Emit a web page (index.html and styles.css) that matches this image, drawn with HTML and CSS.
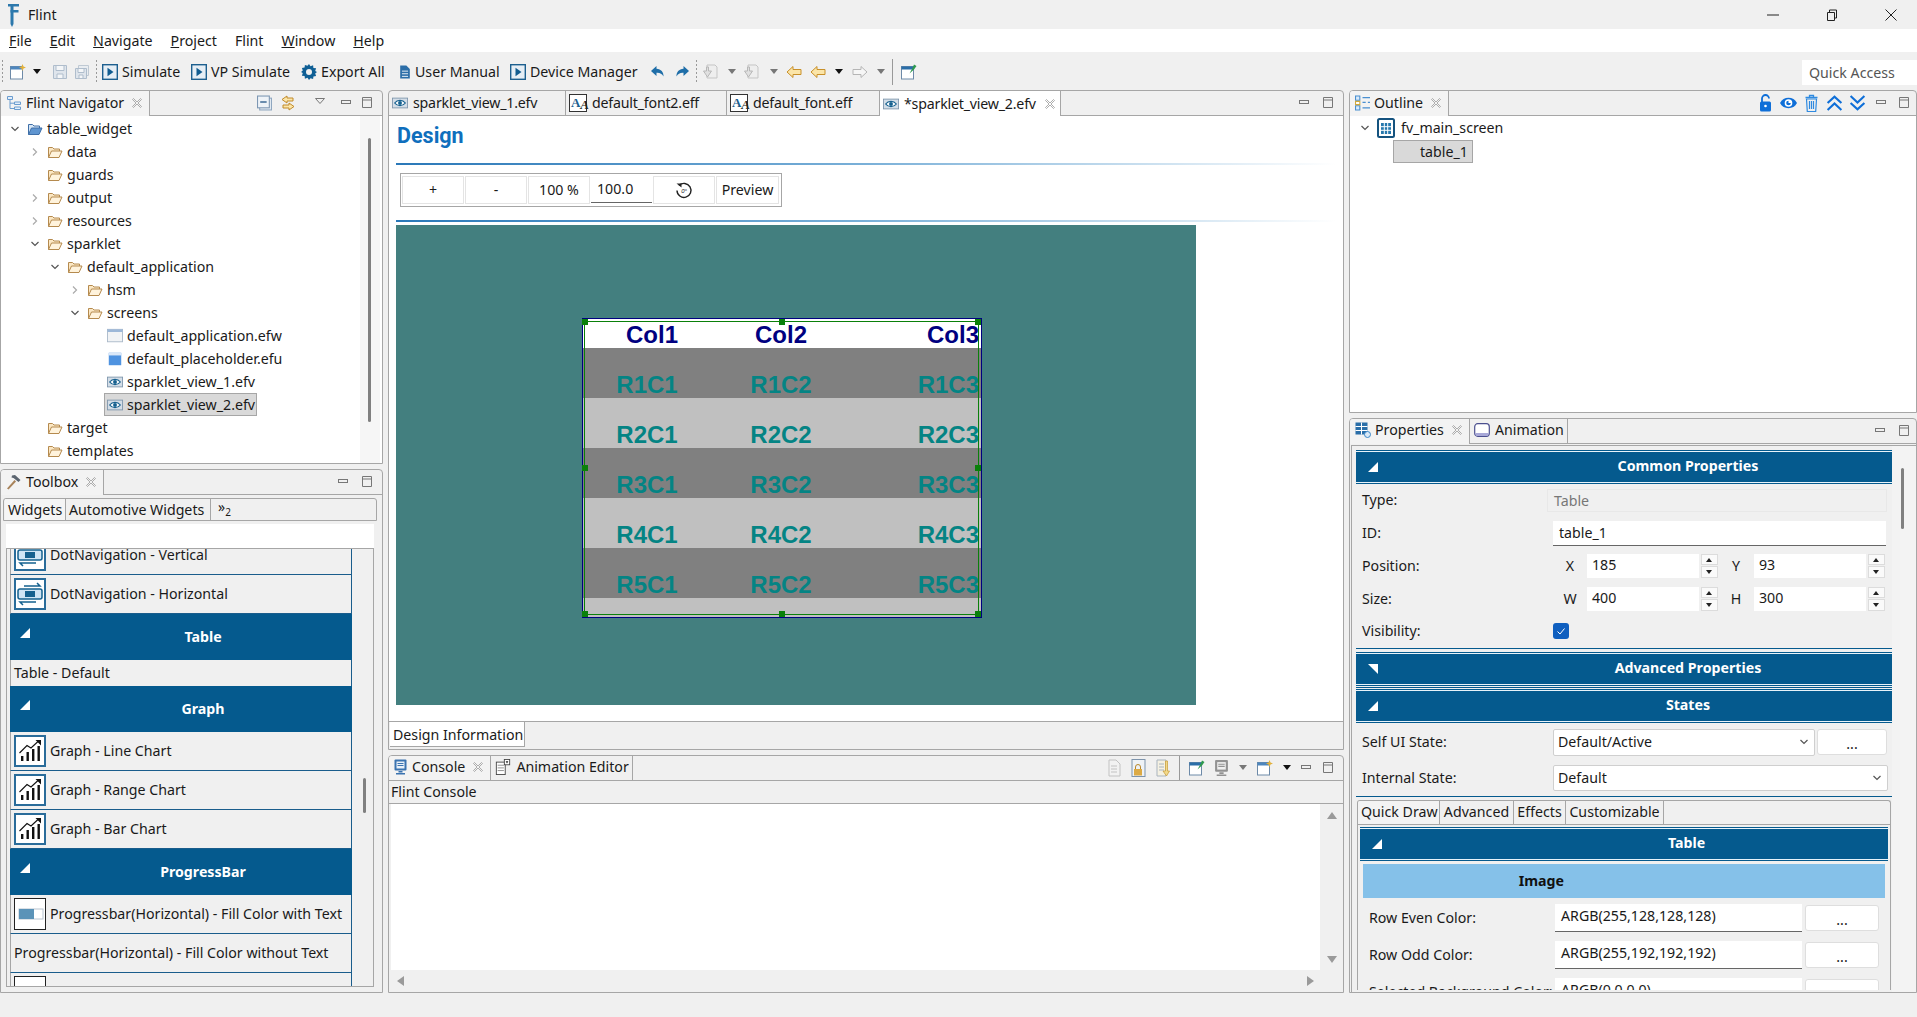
FILE: index.html
```html
<!DOCTYPE html>
<html lang="en">
<head>
<meta charset="utf-8">
<title>Flint</title>
<link rel="stylesheet" href="styles.css">
</head>
<body>
<svg class="defs" width="0" height="0" aria-hidden="true">
  <symbol id="folder" viewBox="0 0 16 16"><path d="M1.500 13.500V3.500h4l1.500 1.500h5.500v2" fill="#fbe7c3" stroke="#b58a4e"/><path d="M1.500 13.500l3-6.500h10.500l-3 6.500z" fill="#fff3dc" stroke="#b58a4e" stroke-linejoin="round"/></symbol>
  <symbol id="folder-blue" viewBox="0 0 16 16"><path d="M1.500 13.500V3.500h4l1.500 1.500h5.500v2" fill="#d5e5f5" stroke="#3f6fa8"/><path d="M1.500 13.500l3-6.500h10.500l-3 6.500z" fill="#5f95d0" stroke="#3f6fa8" stroke-linejoin="round"/></symbol>
  <symbol id="eye" viewBox="0 0 18 16"><rect x=".5" y="2.500" width="17" height="11" fill="#d3dde7" stroke="#7f97ad"/><path d="M3 8c3-4 9-4 12 0-3 4-9 4-12 0z" fill="#fff" stroke="#15608f" stroke-width="1.400"/><circle cx="9" cy="8" r="2.200" fill="#15608f"/></symbol>
  <symbol id="win" viewBox="0 0 18 16"><rect x=".5" y=".5" width="17" height="14" fill="#f1f3f5" stroke="#a9b8c8"/><rect x=".5" y=".5" width="17" height="3" fill="#9db8d8"/></symbol>
  <symbol id="place" viewBox="0 0 18 16"><path d="M2 1h14v14H2z" fill="#4f93e0"/><path d="M2 1h14v3H2z" fill="#dbe8f8"/></symbol>
  <symbol id="min" viewBox="0 0 12 12"><rect x=".5" y="3.500" width="9" height="3" fill="none" stroke="#777"/></symbol>
  <symbol id="max" viewBox="0 0 12 12"><path d="M1.500.5h9v10h-9zM1.500 3h9" fill="none" stroke="#777"/></symbol>
  <symbol id="x" viewBox="0 0 12 12"><path d="M2.500 1.500L6 5l3.500-3.500 1 1L7 6l3.500 3.500-1 1L6 7l-3.500 3.500-1-1L5 6 1.500 2.500z" fill="none" stroke="#999" stroke-width=".8"/></symbol>
  <symbol id="play" viewBox="0 0 16 16"><rect x=".7" y=".7" width="14.600" height="14.600" fill="#e6eef5" stroke="#1d5f8f" stroke-width="1.400"/><path d="M5.500 3.800l6 4.200-6 4.200z" fill="#115c90"/></symbol>
  <symbol id="gear" viewBox="0 0 16 16"><path d="M8 0l1.500 2.200 2.600-.9.300 2.700 2.700.3-.9 2.600L16 8l-1.800 1.500.9 2.600-2.700.3-.3 2.700-2.600-.9L8 16l-1.500-2.200-2.600.9-.3-2.700-2.700-.3.9-2.600L0 8l1.800-1.500-.9-2.600 2.700-.3.300-2.700 2.600.9z" fill="#0f5f95"/><circle cx="8" cy="8" r="3" fill="#f0f0f0"/></symbol>
  <symbol id="doc" viewBox="0 0 12 16"><path d="M.5.500h7l4 4v11H.5z" fill="#2c6ea8"/><path d="M2.500 7h7M2.500 10h7M2.500 13h7" stroke="#fff"/></symbol>
  <symbol id="new" viewBox="0 0 16 16"><rect x=".5" y="2.500" width="12" height="12.500" fill="#fff" stroke="#6d8aa8"/><rect x=".5" y="2.500" width="12" height="3" fill="#4d86bd"/><path d="M12.500 0l1 2.500 2.500 1-2.500 1-1 2.500-1-2.500-2.500-1 2.500-1z" fill="#e2b13c"/></symbol>
  <symbol id="save" viewBox="0 0 16 16"><path d="M1.500 1.500h13v13h-13z" fill="#dbe3ec" stroke="#9fb1c4"/><path d="M4 1.500h8v5H4zM5 10h6v4.500H5z" fill="#f6f8fa" stroke="#9fb1c4"/></symbol>
  <symbol id="saveall" viewBox="0 0 16 16"><path d="M4.500 1.500h10v10h-10z" fill="#e8edf2" stroke="#b3c0cd"/><path d="M1.500 4.500h11v10h-11z" fill="#dbe3ec" stroke="#9fb1c4"/><path d="M4 4.500h6v4H4zM5 11h4v3.500H5z" fill="#f6f8fa" stroke="#9fb1c4"/></symbol>
  <symbol id="undo" viewBox="0 0 16 16"><path d="M6.500 2L1 7l5.500 5V8.800c3-.3 5.500.7 7 3.700.3-4.500-2.500-7.500-7-7.800z" fill="#1f6ea8"/></symbol>
  <symbol id="nav-down" viewBox="0 0 16 16"><path d="M5 1h8l2 2v11H5z" fill="#eee" stroke="#bbb"/><path d="M1.500 7h3V3h2v4h3l-4 6z" fill="#ddd" stroke="#aaa"/></symbol>
  <symbol id="arrow-y" viewBox="0 0 16 16"><path d="M7 2.500L1 8l6 5.500V10.500h8v-5H7z" fill="#fbe5a8" stroke="#c8902a"/></symbol>
  <symbol id="arrow-g" viewBox="0 0 16 16"><path d="M9 2.500L15 8l-6 5.500V10.500H1v-5h8z" fill="#f6f6f6" stroke="#b5b5b5"/></symbol>
  <symbol id="pin" viewBox="0 0 16 16"><rect x=".5" y="2.500" width="12" height="12.500" fill="#fff" stroke="#6d8aa8"/><rect x=".5" y="2.500" width="12" height="3" fill="#2a6ea8"/><path d="M8.500 9.500l3-5.500 1.500-3.500 2.500 1.500-2.500 3.500z" fill="#2f9a4f"/></symbol>
  <symbol id="tree" viewBox="0 0 16 16"><path d="M1.500 1.500h5v3h-5zM8.500 7h6v2.500h-6zM8.500 12h6v2.500h-6z" fill="#e3eefa" stroke="#6a9ccf"/><path d="M4 5v8.500h4.500M4 8.200h4.500" fill="none" stroke="#6a9ccf"/></symbol>
  <symbol id="hammer" viewBox="0 0 16 16"><path d="M1 14.500L8.500 6l1.500 1.500L2.500 15.500z" fill="#a8835a"/><path d="M6 1.500l3-.5 5.500 5-2 2L7.500 4 5.500 3.500z" fill="#5c6570"/></symbol>
  <symbol id="collapse" viewBox="0 0 14 14"><rect x="2.500" y="2.500" width="11" height="11" fill="#e8eef5" stroke="#8fa7c0"/><rect x=".5" y=".5" width="11" height="11" fill="#eef3f8" stroke="#7d97b3"/><path d="M3 6h6" stroke="#3d6a96" stroke-width="1.400"/></symbol>
  <symbol id="link" viewBox="0 0 16 16"><path d="M7 1L2 4.500 7 8V6h6V3H7zM9 8l5 3.500-5 3.500v-2H3v-3h6z" fill="#fbe5a8" stroke="#c08a2b"/></symbol>
  <symbol id="outl" viewBox="0 0 14 14"><path d="M.5.500h4v4h-4zM.5 9.500h4v4h-4z" fill="#d9eafa" stroke="#4a8fd0"/><path d="M7 2h7M7 6.500h3M12 6.500h2M7 11.500h7" stroke="#4a8fd0" stroke-width="1.200"/><path d="M.5 5.500h4v3h-4z" fill="#fff" stroke="#d0a83a"/></symbol>
  <symbol id="lock" viewBox="0 0 14 18"><path d="M3.500 8V4.500a3.500 3.500 0 0 1 7 0" fill="none" stroke="#0f6fd8" stroke-width="1.800"/><rect x="1.500" y="7.500" width="11" height="10" rx="1.500" fill="#0f6fd8"/><circle cx="7" cy="12" r="1.300" fill="#fff"/></symbol>
  <symbol id="eye2" viewBox="0 0 16 12"><path d="M0 6c3-6.500 13-6.500 16 0-3 6.500-13 6.500-16 0z" fill="#0f6fd8"/><circle cx="8" cy="6" r="3.600" fill="#fff"/><path d="M8 3.800V6h2.200A2.200 2.200 0 1 1 8 3.800z" fill="#0f6fd8"/></symbol>
  <symbol id="trash" viewBox="0 0 14 18"><path d="M1 3.500h12M5 3V1.500h4V3" fill="none" stroke="#2f8ae0" stroke-width="1.300"/><path d="M2 5h10l-.8 12.500H2.800zM5 7v8M7 7v8M9 7v8" fill="none" stroke="#2f8ae0" stroke-width="1.200"/></symbol>
  <symbol id="up2" viewBox="0 0 16 16"><path d="M1.500 8L8 2l6.500 6M1.500 14.500L8 8.500l6.500 6" fill="none" stroke="#0f6fd8" stroke-width="2"/></symbol>
  <symbol id="down2" viewBox="0 0 16 16"><path d="M1.500 1.500L8 7.500l6.500-6M1.500 8L8 14l6.500-6" fill="none" stroke="#0f6fd8" stroke-width="2"/></symbol>
  <symbol id="grid" viewBox="0 0 18 20"><rect x="1" y="1" width="16" height="18" rx="1.500" fill="#fff" stroke="#15537f" stroke-width="2"/><path d="M4 5h10v11H4z" fill="#2678ad"/><path d="M7.300 5v11M10.700 5v11M4 8.700h10M4 12.300h10" stroke="#fff"/></symbol>
  <symbol id="props" viewBox="0 0 16 16"><rect x=".5" y=".5" width="12" height="12" fill="#2a6ea8"/><path d="M.5 4.500h12M.5 8.500h12M6.500.5v12" stroke="#fff"/><circle cx="12.500" cy="12.500" r="3" fill="#dbe9f6" stroke="#3b87c8"/></symbol>
  <symbol id="anim" viewBox="0 0 16 14"><rect x=".7" y=".7" width="14.600" height="12.600" rx="3" fill="#fff" stroke="#4b4f8f" stroke-width="1.200"/><path d="M1.500 10h13v1.500a1.500 1.500 0 0 1-1.500 1.500H3a1.500 1.500 0 0 1-1.500-1.500z" fill="#a8a8d8"/></symbol>
  <symbol id="console" viewBox="0 0 14 16"><rect x="1" y=".5" width="12" height="11" rx="1" fill="#3a73b0"/><rect x="3" y="2.500" width="8" height="7" fill="#e8f0f8"/><path d="M4 4.500h6M4 6.500h6" stroke="#3a73b0"/><path d="M5 12h4v1.500H5zM2.500 14h9v1.500h-9z" fill="#3a73b0"/></symbol>
  <symbol id="animed" viewBox="0 0 16 18"><rect x=".5" y="3.500" width="10" height="14" fill="#fff" stroke="#444"/><path d="M2 7h7M2 10h7M2 13h7" stroke="#888"/><rect x="9.500" y=".5" width="6" height="6" fill="#fff" stroke="#444"/><path d="M11 2.500h3L12.500 5z" fill="#222"/></symbol>
  <symbol id="c-doc" viewBox="0 0 14 18"><path d="M1.500 1h7l4 4v12h-11z" fill="#f2f2f2" stroke="#c2c2c2"/><path d="M3.500 7h6M3.500 10h6M3.500 13h6" stroke="#c2c2c2"/></symbol>
  <symbol id="c-doc2" viewBox="0 0 14 18"><path d="M1.500 1h9v16h-9z" fill="#f5f1e2" stroke="#a9b4bf"/><path d="M3.500 5h5M3.500 8h5M3.500 11h5" stroke="#a9b4bf"/><path d="M10 2v10H7.500l3.500 5 3-5h-2V2z" fill="#f2d98a" stroke="#c79b35" stroke-width=".7"/></symbol>
  <symbol id="c-lock" viewBox="0 0 14 18"><rect x=".5" y=".5" width="13" height="17" fill="#eef2f6" stroke="#7d93ab"/><path d="M4 10V8a2.500 2.500 0 0 1 5 0v2" fill="none" stroke="#b8872a"/><rect x="2.500" y="10" width="8" height="6.500" fill="#dcaa45"/></symbol>
  <symbol id="dotnav" viewBox="0 0 28 28"><path d="M2 11a2 2 0 0 1 2-2h20a2 2 0 0 1 2 2v6a2 2 0 0 1-2 2H4a2 2 0 0 1-2-2z" fill="#cfe5f5" stroke="#15618f" stroke-width="1.500"/><rect x="9" y="11" width="10" height="6" fill="#15618f"/><path d="M8 6h16l-3-3M20 22H4l3 3" fill="none" stroke="#15618f" stroke-width="1.500"/></symbol>
  <symbol id="chart" viewBox="0 0 28 28"><path d="M5 24v-5h2.400v5zM10.500 24v-9h2.400v9zM16 24V12h2.400v12zM21.500 24V9h2.400v15z" fill="#111"/><path d="M3.500 16L11 8.500l4 2.500L22 4.500" fill="none" stroke="#111" stroke-width="1.100"/><path d="M19.500 3h5.500v5.500z" fill="#111"/></symbol>
  <symbol id="progress" viewBox="0 0 28 28"><rect x="3" y="9" width="24" height="10" fill="#fff" stroke="#b8c4d0"/><rect x="3" y="9" width="15" height="10" fill="#5b93b8"/></symbol>
  <symbol id="tri-open" viewBox="0 0 10 10"><path d="M10 0v10H0z" fill="#fff"/></symbol>
  <symbol id="tri-closed" viewBox="0 0 10 10"><path d="M0 0h10v10z" fill="#fff"/></symbol>
  <symbol id="chev-d" viewBox="0 0 10 10"><path d="M1.500 3L5 6.500 8.500 3" fill="none" stroke="#555" stroke-width="1.200"/></symbol>
  <symbol id="chev-r" viewBox="0 0 10 10"><path d="M3 1.500L6.500 5 3 8.500" fill="none" stroke="#aaa" stroke-width="1.200"/></symbol>
  <symbol id="drop" viewBox="0 0 10 6"><path d="M1 0h8L5 5z"/></symbol>
</svg>

<header class="titlebar">
  <svg class="logo" viewBox="0 0 11 24"><path d="M0 1h11v2.500H0zM2.500 7h8v2.500h-8z" fill="#2c78ac"/><path d="M2.500 3h3v18L4 24l-1.500-3z" fill="#2c78ac"/></svg>
  <span class="app-name">Flint</span>
  <div class="win-btns">
    <svg class="win-ic" viewBox="0 0 12 12"><path d="M0 6h12" stroke="#222"/></svg>
    <svg class="win-ic" viewBox="0 0 12 12"><path d="M1.500 3.500h7v8h-7zM3.500 3.500V1h7v8H8.500" fill="none" stroke="#222"/></svg>
    <svg class="win-ic" viewBox="0 0 12 12"><path d="M.5.500l11 11M11.500.500l-11 11" stroke="#222"/></svg>
  </div>
</header>

<nav class="menubar">
  <span class="menu-item"><u>F</u>ile</span>
  <span class="menu-item"><u>E</u>dit</span>
  <span class="menu-item"><u>N</u>avigate</span>
  <span class="menu-item"><u>P</u>roject</span>
  <span class="menu-item">Flint</span>
  <span class="menu-item"><u>W</u>indow</span>
  <span class="menu-item"><u>H</u>elp</span>
</nav>

<div class="toolbar">
  <span class="grip"></span>
  <svg class="ic16 m7"><use href="#new"/></svg>
  <svg class="drop m6"><use href="#drop"/></svg>
  <svg class="ic16 m10 dim"><use href="#save"/></svg>
  <svg class="ic16 m6 dim"><use href="#saveall"/></svg>
  <span class="grip m6"></span>
  <span class="tool m5 t-sim"><svg class="ic16"><use href="#play"/></svg>Simulate</span>
  <span class="tool t-vp"><svg class="ic16"><use href="#play"/></svg>VP Simulate</span>
  <span class="tool t-exp"><svg class="ic16"><use href="#gear"/></svg>Export All</span>
  <span class="tool t-man"><svg class="ic12"><use href="#doc"/></svg>User Manual</span>
  <span class="tool t-dev"><svg class="ic16"><use href="#play"/></svg>Device Manager</span>
  <svg class="ic16"><use href="#undo"/></svg>
  <svg class="ic16 m8 flip"><use href="#undo"/></svg>
  <span class="grip m6"></span>
  <svg class="ic16 m5 dim"><use href="#nav-down"/></svg>
  <svg class="drop m9 gray"><use href="#drop"/></svg>
  <svg class="ic16 m6 dim"><use href="#nav-down"/></svg>
  <svg class="drop m10 gray"><use href="#drop"/></svg>
  <svg class="ic16 m7"><use href="#arrow-y"/></svg>
  <svg class="ic16 m8"><use href="#arrow-y"/></svg>
  <svg class="drop m8"><use href="#drop"/></svg>
  <svg class="ic16 m8"><use href="#arrow-g"/></svg>
  <svg class="drop m8 gray"><use href="#drop"/></svg>
  <span class="vsep m6"></span>
  <svg class="ic16 m8"><use href="#pin"/></svg>
  <span class="quick">Quick Access</span>
</div>

<main class="workbench">
  <div class="col">
    <section class="panel nav-panel">
      <div class="phead">
        <div class="ptab ptab-on"><svg class="ic16"><use href="#tree"/></svg>Flint Navigator<svg class="ic-x"><use href="#x"/></svg></div>
        <div class="pactions a-nav">
          <svg class="ic14"><use href="#collapse"/></svg>
          <svg class="ic16"><use href="#link"/></svg>
          <svg class="drop-o" viewBox="0 0 10 6"><path d="M.5.500h9L5 5.500z" fill="none" stroke="#777"/></svg>
          <svg class="ic12"><use href="#min"/></svg>
          <svg class="ic12"><use href="#max"/></svg>
        </div>
      </div>
      <div class="pbody tree-wrap">
        <div class="tree">
          <div class="trow lv0"><svg class="ar"><use href="#chev-d"/></svg><span class="tl"><svg class="ic16"><use href="#folder-blue"/></svg>table_widget</span></div>
          <div class="trow lv1"><svg class="ar"><use href="#chev-r"/></svg><span class="tl"><svg class="ic16"><use href="#folder"/></svg>data</span></div>
          <div class="trow lv1"><span class="ar"></span><span class="tl"><svg class="ic16"><use href="#folder"/></svg>guards</span></div>
          <div class="trow lv1"><svg class="ar"><use href="#chev-r"/></svg><span class="tl"><svg class="ic16"><use href="#folder"/></svg>output</span></div>
          <div class="trow lv1"><svg class="ar"><use href="#chev-r"/></svg><span class="tl"><svg class="ic16"><use href="#folder"/></svg>resources</span></div>
          <div class="trow lv1"><svg class="ar"><use href="#chev-d"/></svg><span class="tl"><svg class="ic16"><use href="#folder"/></svg>sparklet</span></div>
          <div class="trow lv2"><svg class="ar"><use href="#chev-d"/></svg><span class="tl"><svg class="ic16"><use href="#folder"/></svg>default_application</span></div>
          <div class="trow lv3"><svg class="ar"><use href="#chev-r"/></svg><span class="tl"><svg class="ic16"><use href="#folder"/></svg>hsm</span></div>
          <div class="trow lv3"><svg class="ar"><use href="#chev-d"/></svg><span class="tl"><svg class="ic16"><use href="#folder"/></svg>screens</span></div>
          <div class="trow lv4"><span class="ar"></span><span class="tl"><svg class="ic16"><use href="#win"/></svg>default_application.efw</span></div>
          <div class="trow lv4"><span class="ar"></span><span class="tl"><svg class="ic16"><use href="#place"/></svg>default_placeholder.efu</span></div>
          <div class="trow lv4"><span class="ar"></span><span class="tl"><svg class="ic16"><use href="#eye"/></svg>sparklet_view_1.efv</span></div>
          <div class="trow lv4"><span class="ar"></span><span class="tl tl-sel"><svg class="ic16"><use href="#eye"/></svg>sparklet_view_2.efv</span></div>
          <div class="trow lv1"><span class="ar"></span><span class="tl"><svg class="ic16"><use href="#folder"/></svg>target</span></div>
          <div class="trow lv1"><span class="ar"></span><span class="tl"><svg class="ic16"><use href="#folder"/></svg>templates</span></div>
        </div>
        <div class="vscroll nav-scroll"><span class="thumb"></span></div>
      </div>
    </section>

    <section class="panel box-panel">
      <div class="phead">
        <div class="ptab ptab-on"><svg class="ic16"><use href="#hammer"/></svg>Toolbox<svg class="ic-x"><use href="#x"/></svg></div>
        <div class="pactions a-box">
          <svg class="ic12"><use href="#min"/></svg>
          <svg class="ic12"><use href="#max"/></svg>
        </div>
      </div>
      <div class="box-body">
        <div class="subtabs">
          <span class="subtab subtab-on">Widgets</span>
          <span class="subtab">Automotive Widgets</span>
          <span class="more">&raquo;<sub>2</sub></span>
        </div>
        <div class="search"></div>
        <div class="list-frame">
          <div class="list">
            <div class="wrow row-cut"><span class="wicon"><svg><use href="#dotnav"/></svg></span>DotNavigation - Vertical</div>
            <div class="wrow"><span class="wicon"><svg><use href="#dotnav"/></svg></span>DotNavigation - Horizontal</div>
            <div class="whead"><svg class="tri"><use href="#tri-open"/></svg>Table</div>
            <div class="wrow wrow-short">Table - Default</div>
            <div class="whead"><svg class="tri"><use href="#tri-open"/></svg>Graph</div>
            <div class="wrow"><span class="wicon"><svg><use href="#chart"/></svg></span>Graph - Line Chart</div>
            <div class="wrow"><span class="wicon"><svg><use href="#chart"/></svg></span>Graph - Range Chart</div>
            <div class="wrow"><span class="wicon"><svg><use href="#chart"/></svg></span>Graph - Bar Chart</div>
            <div class="whead"><svg class="tri"><use href="#tri-open"/></svg>ProgressBar</div>
            <div class="wrow"><span class="wicon wicon-dark"><svg><use href="#progress"/></svg></span>Progressbar(Horizontal) - Fill Color with Text</div>
            <div class="wrow">Progressbar(Horizontal) - Fill Color without Text</div>
            <div class="wrow"><span class="wicon wicon-dark"></span>Progressbar(Horizontal) - Multiple</div>
          </div>
          <div class="list-scroll"><span class="thumb"></span></div>
        </div>
      </div>
    </section>
  </div>

  <div class="col">
    <section class="panel editor-panel">
      <div class="phead">
        <div class="etab"><svg class="ic16"><use href="#eye"/></svg>sparklet_view_1.efv</div>
        <div class="etab"><span class="aa">A<i>A</i></span>default_font2.eff</div>
        <div class="etab"><span class="aa">A<i>A</i></span>default_font.eff</div>
        <div class="etab etab-on"><svg class="ic16"><use href="#eye"/></svg>*sparklet_view_2.efv<svg class="ic-x"><use href="#x"/></svg></div>
        <div class="pactions a-box">
          <svg class="ic12"><use href="#min"/></svg>
          <svg class="ic12"><use href="#max"/></svg>
        </div>
      </div>
      <div class="design">
        <h1 class="design-title">Design</h1>
        <div class="rule"></div>
        <div class="dtools">
          <span class="dbtn">+</span>
          <span class="dbtn">-</span>
          <span class="dbtn">100 %</span>
          <span class="dinput">100.0</span>
          <span class="dbtn"><svg class="reset" viewBox="0 0 18 18"><path d="M4 4.500A7 7 0 1 1 2 9.500" fill="none" stroke="#222" stroke-width="1.400"/><path d="M1.500 2.500h5v4z" fill="#222"/><text x="9" y="12" class="deg">0°</text></svg></span>
          <span class="dbtn dbtn-last">Preview</span>
        </div>
        <div class="rule rule-2"></div>
        <div class="canvas">
          <div class="widget">
            <div class="wt-row wt-head"><span class="c1 hc1">Col1</span><span class="c2">Col2</span><span class="c3">Col3</span></div>
            <div class="wt-row even"><span class="c1">R1C1</span><span class="c2">R1C2</span><span class="c3">R1C3</span></div>
            <div class="wt-row odd"><span class="c1">R2C1</span><span class="c2">R2C2</span><span class="c3">R2C3</span></div>
            <div class="wt-row even"><span class="c1">R3C1</span><span class="c2">R3C2</span><span class="c3">R3C3</span></div>
            <div class="wt-row odd"><span class="c1">R4C1</span><span class="c2">R4C2</span><span class="c3">R4C3</span></div>
            <div class="wt-row even"><span class="c1">R5C1</span><span class="c2">R5C2</span><span class="c3">R5C3</span></div>
            <div class="selbox">
              <i class="h tl-h"></i><i class="h tc-h"></i><i class="h tr-h"></i>
              <i class="h ml-h"></i><i class="h mr-h"></i>
              <i class="h bl-h"></i><i class="h bc-h"></i><i class="h br-h"></i>
            </div>
          </div>
        </div>
      </div>
      <div class="btabs"><span class="btab">Design Information</span></div>
    </section>

    <section class="panel console-panel">
      <div class="phead">
        <div class="ctab ctab-on"><svg class="ic14"><use href="#console"/></svg>Console<svg class="ic-x"><use href="#x"/></svg></div>
        <div class="ctab"><svg class="ic16"><use href="#animed"/></svg>Animation Editor</div>
        <div class="pactions a-con">
          <svg class="ic-c"><use href="#c-doc"/></svg>
          <svg class="ic-c"><use href="#c-lock"/></svg>
          <svg class="ic-c"><use href="#c-doc2"/></svg>
          <span class="vsep vsep-s"></span>
          <svg class="ic16"><use href="#pin"/></svg>
          <svg class="ic-c gs"><use href="#console"/></svg>
          <svg class="drop gray"><use href="#drop"/></svg>
          <svg class="ic16"><use href="#new"/></svg>
          <svg class="drop"><use href="#drop"/></svg>
          <svg class="ic12"><use href="#min"/></svg>
          <svg class="ic12"><use href="#max"/></svg>
        </div>
      </div>
      <div class="con-label">Flint Console</div>
      <div class="con-main">
        <div class="con-text"></div>
        <div class="con-v"><span class="ar-up"></span><span class="ar-down"></span></div>
      </div>
      <div class="con-h"><span class="ar-left"></span><span class="ar-right"></span></div>
    </section>
  </div>

  <div class="col">
    <section class="panel outline-panel">
      <div class="phead">
        <div class="ptab ptab-on"><svg class="ic14"><use href="#outl"/></svg>Outline<svg class="ic-x"><use href="#x"/></svg></div>
        <div class="pactions a-out">
          <svg class="ic-o"><use href="#lock"/></svg>
          <svg class="ic-o"><use href="#eye2"/></svg>
          <svg class="ic-o"><use href="#trash"/></svg>
          <svg class="ic-o"><use href="#up2"/></svg>
          <svg class="ic-o"><use href="#down2"/></svg>
          <svg class="ic12"><use href="#min"/></svg>
          <svg class="ic12"><use href="#max"/></svg>
        </div>
      </div>
      <div class="pbody out-body">
        <div class="orow"><svg class="ar"><use href="#chev-d"/></svg><svg class="ic-grid"><use href="#grid"/></svg>fv_main_screen</div>
        <div class="osel">table_1</div>
      </div>
    </section>

    <section class="panel props-panel">
      <div class="phead">
        <div class="ptab ptab-on"><svg class="ic16"><use href="#props"/></svg>Properties<svg class="ic-x"><use href="#x"/></svg></div>
        <div class="ctab"><svg class="ic16"><use href="#anim"/></svg>Animation</div>
        <div class="pactions a-props">
          <svg class="ic12"><use href="#min"/></svg>
          <svg class="ic12"><use href="#max"/></svg>
        </div>
      </div>
      <div class="props-outer">
        <div class="props">
          <div class="sec"><svg class="tri"><use href="#tri-open"/></svg>Common Properties</div>
          <div class="prow r-type"><label>Type:</label><span class="field field-ro">Table</span></div>
          <div class="prow r-id"><label>ID:</label><span class="field">table_1</span></div>
          <div class="prow r-pos"><label>Position:</label>
            <span class="axis">X</span><span class="num">185</span><span class="spin"><b></b><b></b></span>
            <span class="axis axis-2">Y</span><span class="num">93</span><span class="spin"><b></b><b></b></span>
          </div>
          <div class="prow r-size"><label>Size:</label>
            <span class="axis">W</span><span class="num">400</span><span class="spin"><b></b><b></b></span>
            <span class="axis axis-2">H</span><span class="num">300</span><span class="spin"><b></b><b></b></span>
          </div>
          <div class="prow r-vis"><label>Visibility:</label><span class="check"><svg viewBox="0 0 16 16"><path d="M4.500 8.500l2.500 2.500 4.500-5.500" fill="none" stroke="#fff"/></svg></span></div>
          <div class="sep s-a"></div>
          <div class="sec"><svg class="tri"><use href="#tri-closed"/></svg>Advanced Properties</div>
          <div class="sep s-b"></div>
          <div class="sec"><svg class="tri"><use href="#tri-open"/></svg>States</div>
          <div class="prow r-self"><label>Self UI State:</label><span class="combo combo-a">Default/Active<svg class="ic10"><use href="#chev-d"/></svg></span><span class="more-btn mb-a">...</span></div>
          <div class="prow r-int"><label>Internal State:</label><span class="combo combo-b">Default<svg class="ic10"><use href="#chev-d"/></svg></span></div>
          <div class="sep s-c"></div>
          <div class="qtabs-frame">
            <div class="qtabs">
              <span class="qtab qtab-on">Quick Draw</span>
              <span class="qtab">Advanced</span>
              <span class="qtab">Effects</span>
              <span class="qtab">Customizable</span>
            </div>
            <div class="sec sec-inner"><svg class="tri"><use href="#tri-open"/></svg>Table</div>
            <div class="image-head">Image</div>
            <div class="crow"><label>Row Even Color:</label><span class="cfield">ARGB(255,128,128,128)</span><span class="more-btn">...</span></div>
            <div class="crow"><label>Row Odd Color:</label><span class="cfield">ARGB(255,192,192,192)</span><span class="more-btn">...</span></div>
            <div class="crow"><label>Selected Background Color:</label><span class="cfield">ARGB(0,0,0,0)</span><span class="more-btn">...</span></div>
          </div>
        </div>
        <div class="vscroll props-scroll"><span class="thumb"></span></div>
      </div>
    </section>
  </div>
</main>
</body>
</html>
```
FILE: styles.css
```css
* { box-sizing: border-box; }
html, body { margin: 0; height: 100%; }
body {
  width: 1917px; height: 1017px; overflow: hidden;
  background: #f0f0f0; color: #1a1a1a;
  font: 14.2px/20px "Noto Sans", "Open Sans", sans-serif;
  display: flex; flex-direction: column;
}
.defs { position: absolute; }
svg { flex: none; display: block; }
u { text-decoration-thickness: 1px; }

.ic10 { width: 10px; height: 10px; }
.ic12 { width: 12px; height: 14px; }
.ic14 { width: 15px; height: 16px; }
.ic16 { width: 16px; height: 16px; }
.ic-c { width: 15px; height: 18px; }
.dim { opacity: .8; }
.gs { filter: grayscale(1); opacity: .7; }
.flip { transform: scaleX(-1); }
.m5 { margin-left: 5px; } .m6 { margin-left: 6px; } .m7 { margin-left: 7px; }
.m8 { margin-left: 8px; } .m9 { margin-left: 9px; } .m10 { margin-left: 10px; }

/* Title, menu, toolbar */
.titlebar { height: 29px; display: flex; align-items: center; padding-left: 8px; flex: none; }
.logo { width: 11px; height: 24px; }
.app-name { margin-left: 9px; }
.win-btns { margin-left: auto; display: flex; gap: 47px; padding-right: 20px; }
.win-ic { width: 12px; height: 12px; }

.menubar { height: 23px; background: #fff; display: flex; align-items: center; padding-left: 9px; flex: none; }
.menu-item { margin-right: 18px; }

.toolbar { height: 38px; flex: none; display: flex; align-items: center; padding: 1px 0 0 2px; }
.grip { width: 1px; height: 24px; background-image: linear-gradient(#999 50%, transparent 50%); background-size: 1px 4px; }
.drop { width: 10px; height: 6px; fill: #111; }
.drop.gray { fill: #777; }
.tool { display: flex; align-items: center; gap: 4px; white-space: nowrap; }
.t-sim { width: 89px; } .t-vp { width: 110px; } .t-exp { width: 98px; }
.t-man { width: 111px; } .t-dev { width: 140px; }
.vsep { width: 1px; height: 26px; background: #999; }
.quick {
  margin-left: auto; width: 115px; height: 25px; background: #fff;
  color: #555; padding-left: 7px; line-height: 25px; align-self: flex-end; margin-bottom: 5px;
}

/* Workbench */
.workbench {
  height: 903px; flex: none; display: grid; gap: 5px;
  grid-template-columns: 383px 956px 568px;
}
.col { display: flex; flex-direction: column; gap: 5px; min-width: 0; height: 903px; }
.panel { border: 1px solid #a6a6a6; border-radius: 4px 4px 0 0; background: #f0f0f0; display: flex; flex-direction: column; overflow: hidden; }
.nav-panel { height: 374px; }
.box-panel { height: 524px; }
.editor-panel { height: 660px; }
.console-panel { height: 238px; }
.outline-panel { height: 323px; }
.props-panel { height: 576px; }

.phead { height: 25px; flex: none; display: flex; align-items: stretch; border-bottom: 1px solid #a6a6a6; }
.ptab { display: flex; align-items: center; gap: 4px; padding: 0 6px 2px 5px; border-right: 1px solid #a6a6a6; background: #f3f3f3; margin-bottom: -1px; white-space: nowrap; }
.ic-x { width: 12px; height: 12px; margin-left: 3px; }
.pactions { margin-left: auto; display: flex; align-items: center; }
.a-nav { gap: 8px; padding-right: 9px; }
.drop-o { width: 10px; height: 6px; margin: 0 8px 5px 11px; }
.a-box { gap: 11px; padding-right: 9px; }
.a-props { gap: 11px; padding-right: 6px; }

/* Navigator */
.pbody { flex: 1; background: #fff; min-height: 0; }
.tree-wrap { display: flex; }
.tree { width: 359px; padding-top: 1px; }
.trow { height: 23px; display: flex; align-items: center; white-space: nowrap; }
.ar { width: 17px; height: 10px; padding-right: 7px; display: block; flex: none; }
.tl { display: flex; align-items: center; gap: 4px; height: 23px; }
.tl-sel { background: #d9d9d9; border: 1px solid #a6a6a6; margin-left: -3px; padding: 0 1px 0 2px; }
.lv0 { padding-left: 9px; } .lv1 { padding-left: 29px; } .lv2 { padding-left: 49px; }
.lv3 { padding-left: 69px; } .lv4 { padding-left: 89px; }
.vscroll { background: #f6f6f6; }
.nav-scroll { width: 20px; }
.thumb { display: block; background: #808080; border-radius: 2px; }
.nav-scroll .thumb { width: 3px; height: 284px; margin: 22px 0 0 8px; }

/* Toolbox */
.box-body { flex: 1; padding: 3px 5px 5px 2px; min-height: 0; display: flex; flex-direction: column; }
.subtabs { height: 23px; flex: none; display: flex; border: 1px solid #a6a6a6; border-radius: 3px 3px 0 0; padding-left: 1px; }
.subtab { padding: 0 3px; border-right: 1px solid #a6a6a6; line-height: 21px; white-space: nowrap; }
.subtab-on { background: #f5f5f5; width: 61px; }
.subtab:nth-child(2) { width: 145px; }
.more { padding-left: 7px; font-size: 14px; line-height: 16px; }
.more sub { font-size: 10px; }
.search { height: 25px; flex: none; background: #fff; margin: 3px 3px 0; border-bottom: 1px solid #a6a6a6; }
.list-frame { flex: 1; min-height: 0; display: flex; margin: 0 3px; border: 1px solid #a6a6a6; border-top: 0; overflow: hidden; padding-left: 3px; }
.list { width: 342px; flex: none; overflow: hidden; }
.list-scroll { flex: 1; }
.list-scroll .thumb { width: 3px; height: 35px; margin: 229px 0 0 11px; }
.wrow {
  height: 39px; display: flex; align-items: center; gap: 4px; padding-left: 3px;
  border-left: 1px solid #a6a6a6; border-right: 1px solid #1a5d8c; border-bottom: 1px solid #1a5d8c;
  white-space: nowrap; overflow: hidden;
}
.row-cut { margin-top: -13px; }
.wrow-short { height: 26px; border-bottom: 0; }
.wicon { width: 32px; height: 32px; background: #fff; border: 2px solid #2a6c9a; display: flex; align-items: center; justify-content: center; flex: none; }
.wicon svg { width: 28px; height: 28px; flex: none; }
.wicon-dark { border: 1px solid #222; }
.whead {
  height: 46px; background: #055a8e; color: #fff; font-weight: 700;
  display: flex; align-items: center; justify-content: center; padding-left: 44px; position: relative;
}
.tri { width: 10px; height: 10px; position: absolute; left: 10px; top: 14px; }

/* Editor */
.etab { display: flex; align-items: center; gap: 5px; padding: 0 5px 0 3px; border-right: 1px solid #a6a6a6; white-space: nowrap; letter-spacing: -.2px; }
.etab:nth-child(1) { width: 177px; }
.etab:nth-child(2) { width: 161px; }
.etab:nth-child(3) { width: 153px; }
.etab-on { background: #fff; margin-bottom: -1px; width: 181px; }
.aa { width: 18px; height: 18px; border: 1px solid #333; font: 700 13px/15px "Liberation Serif", serif; color: #1c5f8f; display: flex; padding-left: 1px; background: #fff; }
.aa i { color: #222; margin-top: 2px; }
.design { flex: 1; background: #fff; padding: 0 7px; min-height: 0; display: flex; flex-direction: column; }
.design-title { margin: 3px 0 0 1px; height: 34px; font: 700 21.5px/34px "Roboto", "Noto Sans", sans-serif; color: #0f6fbd; flex: none; }
.rule { height: 2px; flex: none; margin-top: 10px; background: linear-gradient(90deg, #2a78b8, #7ab0d8 50%, #fff 100%); }
.rule-2 { margin-top: 13px; }
.dtools {
  flex: none; align-self: flex-start; margin: 8px 0 0 4px; height: 34px; width: 382px;
  border: 1px solid #a6a6a6; display: flex; padding: 3px 2px; gap: 3px; background: #fff;
}
.dbtn { width: 60px; background: #fff; box-shadow: 0 0 0 1px #e4e4e4; display: flex; align-items: center; justify-content: center; }
.dbtn-last { width: 61px; }
.dinput { width: 61px; border-bottom: 1px solid #666; line-height: 24px; padding-left: 6px; margin: 0 -1px; }
.reset { width: 18px; height: 18px; }
.deg { font: italic 6px "Liberation Sans", sans-serif; text-anchor: middle; fill: #222; }
.canvas { width: 800px; height: 480px; background: #437f7f; margin-top: 3px; position: relative; flex: none; }
.widget { position: absolute; left: 186px; top: 93px; width: 400px; height: 300px; border: 1px solid #000080; background: #c0c0c0; font: 700 24px/24px "Liberation Sans", Arial, sans-serif; color: #048484; }
.wt-row { height: 50px; display: grid; grid-template-columns: 128px 140px 130px; align-items: end; padding-bottom: 1px; }
.wt-head { height: 29px; background: #fff; color: #000080; padding-bottom: 1px; }
.even { background: #808080; }
.odd { background: #c0c0c0; }
.c1, .c2 { text-align: center; }
.c3 { text-align: right; padding-right: 2px; }
.hc1 { padding-left: 10px; }
.selbox { position: absolute; left: 1px; top: 2px; width: 395px; height: 294px; border: 1px solid #0a800a; }
.h { position: absolute; width: 6px; height: 6px; background: #0a800a; }
.tl-h { left: -3px; top: -3px; } .tc-h { left: 194px; top: -3px; } .tr-h { right: -3px; top: -3px; }
.ml-h { left: -3px; top: 143px; } .mr-h { right: -3px; top: 143px; }
.bl-h { left: -3px; bottom: -3px; } .bc-h { left: 194px; bottom: -3px; } .br-h { right: -3px; bottom: -3px; }
.btabs { height: 28px; flex: none; padding: 1px 0 0 1px; background: linear-gradient(#a6a6a6 0 1px, #f0f0f0 1px); }
.btab { display: block; width: 135px; height: 25px; line-height: 26px; background: #fff; padding-left: 3px; border-right: 1px solid #a6a6a6; border-bottom: 1px solid #a6a6a6; white-space: nowrap; }

/* Console */
.ctab { display: flex; align-items: center; gap: 5px; padding: 0 3px 2px 4px; border-right: 1px solid #a6a6a6; white-space: nowrap; }
.ctab-on { background: #f3f3f3; gap: 4px; padding-right: 6px; }
.a-con { gap: 9px; padding-right: 9px; }
.vsep-s { height: 24px; }
.con-label { height: 23px; flex: none; line-height: 22px; padding-left: 2px; border-bottom: 1px solid #a6a6a6; }
.con-main { flex: 1; display: flex; min-height: 0; margin-left: 2px; }
.con-text { flex: 1; background: #fff; }
.con-v { width: 23px; display: flex; flex-direction: column; justify-content: space-between; align-items: center; padding: 8px 0 7px; }
.con-h { height: 22px; flex: none; display: flex; justify-content: space-between; align-items: center; padding: 0 29px 0 8px; }
.ar-up, .ar-down, .ar-left, .ar-right { width: 0; height: 0; border: 5px solid transparent; }
.ar-up { border-bottom: 7px solid #9a9a9a; border-top: 0; }
.ar-down { border-top: 7px solid #9a9a9a; border-bottom: 0; }
.ar-left { border-right: 7px solid #9a9a9a; border-left: 0; }
.ar-right { border-left: 7px solid #9a9a9a; border-right: 0; }

/* Outline */
.a-out { gap: 6px; padding-right: 6px; }
.ic-o { width: 17px; height: 18px; }
.a-out .ic12 { margin-left: 4px; }
.orow { height: 23px; display: flex; align-items: center; padding-left: 10px; white-space: nowrap; }
.ic-grid { width: 18px; height: 20px; margin-right: 6px; }
.osel { margin: 1px 0 0 43px; width: 80px; height: 23px; background: #d9d9d9; border: 1px solid #a6a6a6; line-height: 21px; padding-left: 26px; }

/* Properties */
.props-outer { flex: 1; min-height: 0; display: flex; margin: 1px 0 0 1px; border: 1px solid #a6a6a6; border-right: 0; border-bottom: 0; overflow: hidden; }
.props { width: 540px; flex: none; padding: 4px 0 0 4px; overflow: hidden; }
.props-scroll { flex: 1; background: #f3f3f3; }
.props-scroll .thumb { width: 3px; height: 61px; margin: 22px 0 0 9px; }
.sec {
  height: 34px; color: #fff; font-weight: 700; display: flex; align-items: center; justify-content: center;
  padding: 0 0 1px 128px; position: relative;
  background: linear-gradient(#055a8e 0 1px, #e8f3fa 1px 2px, #055a8e 2px calc(100% - 2px), #e8f3fa calc(100% - 2px) calc(100% - 1px), #055a8e calc(100% - 1px));
}
.sec .tri { left: 12px; top: 12px; }
.sep { height: 1px; background: #055a8e; }
.s-a { margin-top: 9px; margin-bottom: 3px; }
.s-b { margin: 1px 0; }
.s-c { margin-top: 5px; }
.prow { display: flex; align-items: center; padding-left: 6px; white-space: nowrap; }
.prow label { width: 191px; flex: none; }
.r-type { height: 23px; margin-top: 5px; }
.r-type label { width: 185px; }
.r-id { height: 25px; margin-top: 9px; }
.r-pos { height: 24px; margin-top: 8px; }
.r-size { height: 24px; margin-top: 9px; }
.r-vis { height: 16px; margin-top: 12px; }
.r-self { height: 27px; margin-top: 6px; }
.r-int { height: 26px; margin-top: 9px; }
.field { height: 100%; width: 333px; background: #fff; border-bottom: 1px solid #666; padding-left: 6px; line-height: 24px; }
.field-ro { width: 340px; background: #f0f0f0; border: 1px solid #e8e8e8; color: #777; line-height: 21px; }
.axis { width: 34px; text-align: center; flex: none; }
.axis-2 { width: 36px; }
.num { width: 112px; height: 100%; background: #fff; padding-left: 5px; line-height: 22px; }
.spin { width: 17px; height: 24px; margin-left: 2px; display: flex; flex-direction: column; gap: 1px; flex: none; }
.spin b { flex: 1; background: #fafafa; border: 1px solid #dcdcdc; position: relative; }
.spin b::after { content: ""; position: absolute; left: 4px; top: 3px; border: 3.500px solid transparent; border-top: 0; border-bottom: 4px solid #222; }
.spin b + b::after { border-bottom: 0; border-top: 4px solid #222; }
.check { width: 16px; height: 16px; background: #0f5fbf; border-radius: 3px; }
.combo { height: 100%; background: #fff; border: 1px solid #cfcfcf; border-radius: 2px; display: flex; align-items: center; justify-content: space-between; padding: 0 5px 0 4px; }
.combo-a { width: 262px; }
.combo-b { width: 335px; }
.more-btn { background: #fff; border: 1px solid #dedede; border-radius: 3px; display: flex; align-items: flex-end; justify-content: center; line-height: 20px; }
.mb-a { width: 70px; height: 26px; margin-left: 2px; }
.qtabs-frame { margin: 3px 0 0 1px; width: 534px; height: 190px; border: 1px solid #a6a6a6; border-bottom: 0; border-radius: 3px 3px 0 0; padding: 0 2px; overflow: hidden; }
.qtabs { height: 24px; display: flex; margin: 0 -2px; border-bottom: 1px solid #a6a6a6; }
.qtab { padding: 0 3px; border-right: 1px solid #a6a6a6; line-height: 22px; white-space: nowrap; text-align: center; }
.qtab:nth-child(1) { width: 82px; background: #f3f3f3; }
.qtab:nth-child(2) { width: 74px; }
.qtab:nth-child(3) { width: 52px; }
.qtab:nth-child(4) { width: 98px; }
.sec-inner { margin-top: 2px; padding-left: 125px; }
.image-head { height: 34px; margin: 3px 3px 0; background: #85c1e9; font-weight: 700; color: #111; text-align: right; padding-right: 321px; line-height: 33px; }
.crow { height: 28px; display: flex; align-items: center; padding-left: 9px; white-space: nowrap; margin-bottom: 9px; }
.image-head + .crow { margin-top: 6px; }
.crow label { width: 186px; flex: none; overflow: hidden; }
.cfield { width: 247px; height: 28px; background: #fff; border-bottom: 1px solid #666; padding-left: 6px; line-height: 24px; }
.crow .more-btn { width: 74px; height: 26px; margin-left: 3px; }
```
